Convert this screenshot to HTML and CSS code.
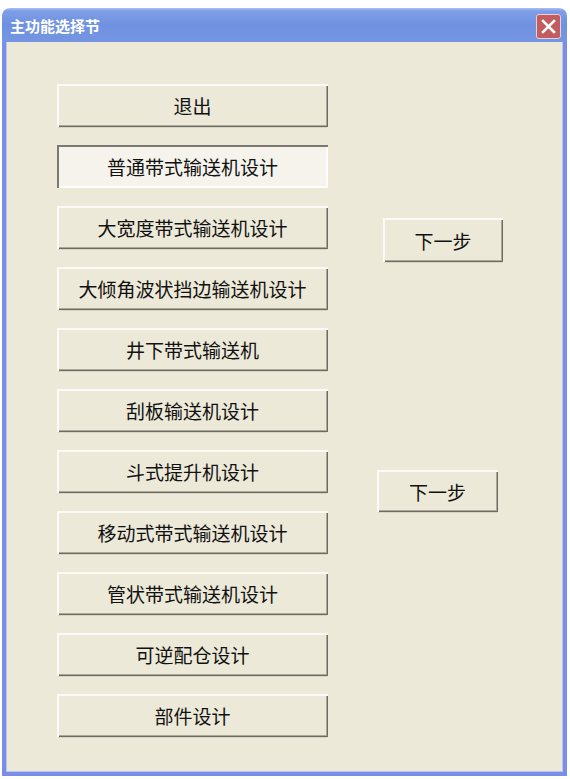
FILE: index.html
```html
<!DOCTYPE html>
<html>
    <head>
        <title>主功能选择节</title>
        <link rel="stylesheet" href="styles.css">
    </head>
    <body>
        <div class="window">
            <div class="titlebar">
                <span class="title">主功能选择节</span>
                <div class="close">
                    <svg width="15" height="15" viewBox="0 0 15 15">
                        <path d="M2 2 L13 13 M13 2 L2 13" stroke="#fff" stroke-width="2.6" stroke-linecap="square"/>
                    </svg>
                </div>
            </div>
            <div class="client">
                <div class="main-col">
                    <button class="btn">退出</button>
                    <button class="btn focused">普通带式输送机设计</button>
                    <button class="btn">大宽度带式输送机设计</button>
                    <button class="btn">大倾角波状挡边输送机设计</button>
                    <button class="btn">井下带式输送机</button>
                    <button class="btn">刮板输送机设计</button>
                    <button class="btn">斗式提升机设计</button>
                    <button class="btn">移动式带式输送机设计</button>
                    <button class="btn">管状带式输送机设计</button>
                    <button class="btn">可逆配仓设计</button>
                    <button class="btn">部件设计</button>
                </div>
                <div class="side-col">
                    <button class="btn next next-1">下一步</button>
                    <button class="btn next next-2">下一步</button>
                </div>
            </div>
        </div>
    </body>
</html>
```

FILE: styles.css
```css
html, body {
    margin: 0;
    background: #fff;
    font-family: "Noto Sans CJK SC", "Liberation Sans", sans-serif;
}

.window {
    margin: 8px 0 0 2px;
    width: 565px;
    height: 768px;
    display: flex;
    flex-direction: column;
}

.titlebar {
    height: 34px;
    flex: none;
    display: flex;
    align-items: center;
    justify-content: space-between;
    padding: 0 6px 0 8px;
    border-radius: 8px 8px 0 0;
    background: linear-gradient(to bottom, #a9c1f3 0px, #7d9de6 3px, #6f92e0 50%, #7595e2 100%);
}

.title {
    color: #fff;
    font-weight: bold;
    font-size: 15px;
    letter-spacing: 0px;
}

.close {
    width: 23px;
    height: 23px;
    margin-top: 2px;
    border: 1px solid #e8d0d8;
    border-radius: 3px;
    background: #c25c5e;
    display: flex;
    align-items: center;
    justify-content: center;
}

.client {
    flex: 1;
    display: flex;
    background: #ece9d8;
    border: 4px solid #7a8ee6;
    border-top: none;
    box-shadow: inset 1px 0 0 #b8c4f0, inset -1px 0 0 #b8c4f0, inset 0 -1px 0 #b8c4f0;
    padding: 42px 0 0 51px;
}

.main-col {
    display: flex;
    flex-direction: column;
    gap: 18px;
    width: 271px;
}

.btn {
    height: 43px;
    padding: 0;
    background: #ece9d8;
    border: none;
    box-shadow: inset 2px 2px 0 #fbfaf6, inset -1px -1px 0 #6e6c62, inset -2px -2px 0 #aca899, 0 2px 0 -1px #d8d4c6;
    font-family: "Noto Sans CJK SC", "Liberation Sans", sans-serif;
    font-size: 19px;
    color: #111;
}

.btn.focused {
    background: #f5f3eb;
    box-shadow: inset 2px 2px 0 #7c7a70, inset -2px -2px 0 #fdfdfb;
}

.side-col {
    display: flex;
    flex-direction: column;
    align-items: flex-start;
}

.next {
    width: 120px;
}

.next-1 {
    height: 44px;
    margin: 134px 0 0 55px;
}

.next-2 {
    height: 42px;
    margin: 208px 0 0 49px;
    width: 121px;
}
```
